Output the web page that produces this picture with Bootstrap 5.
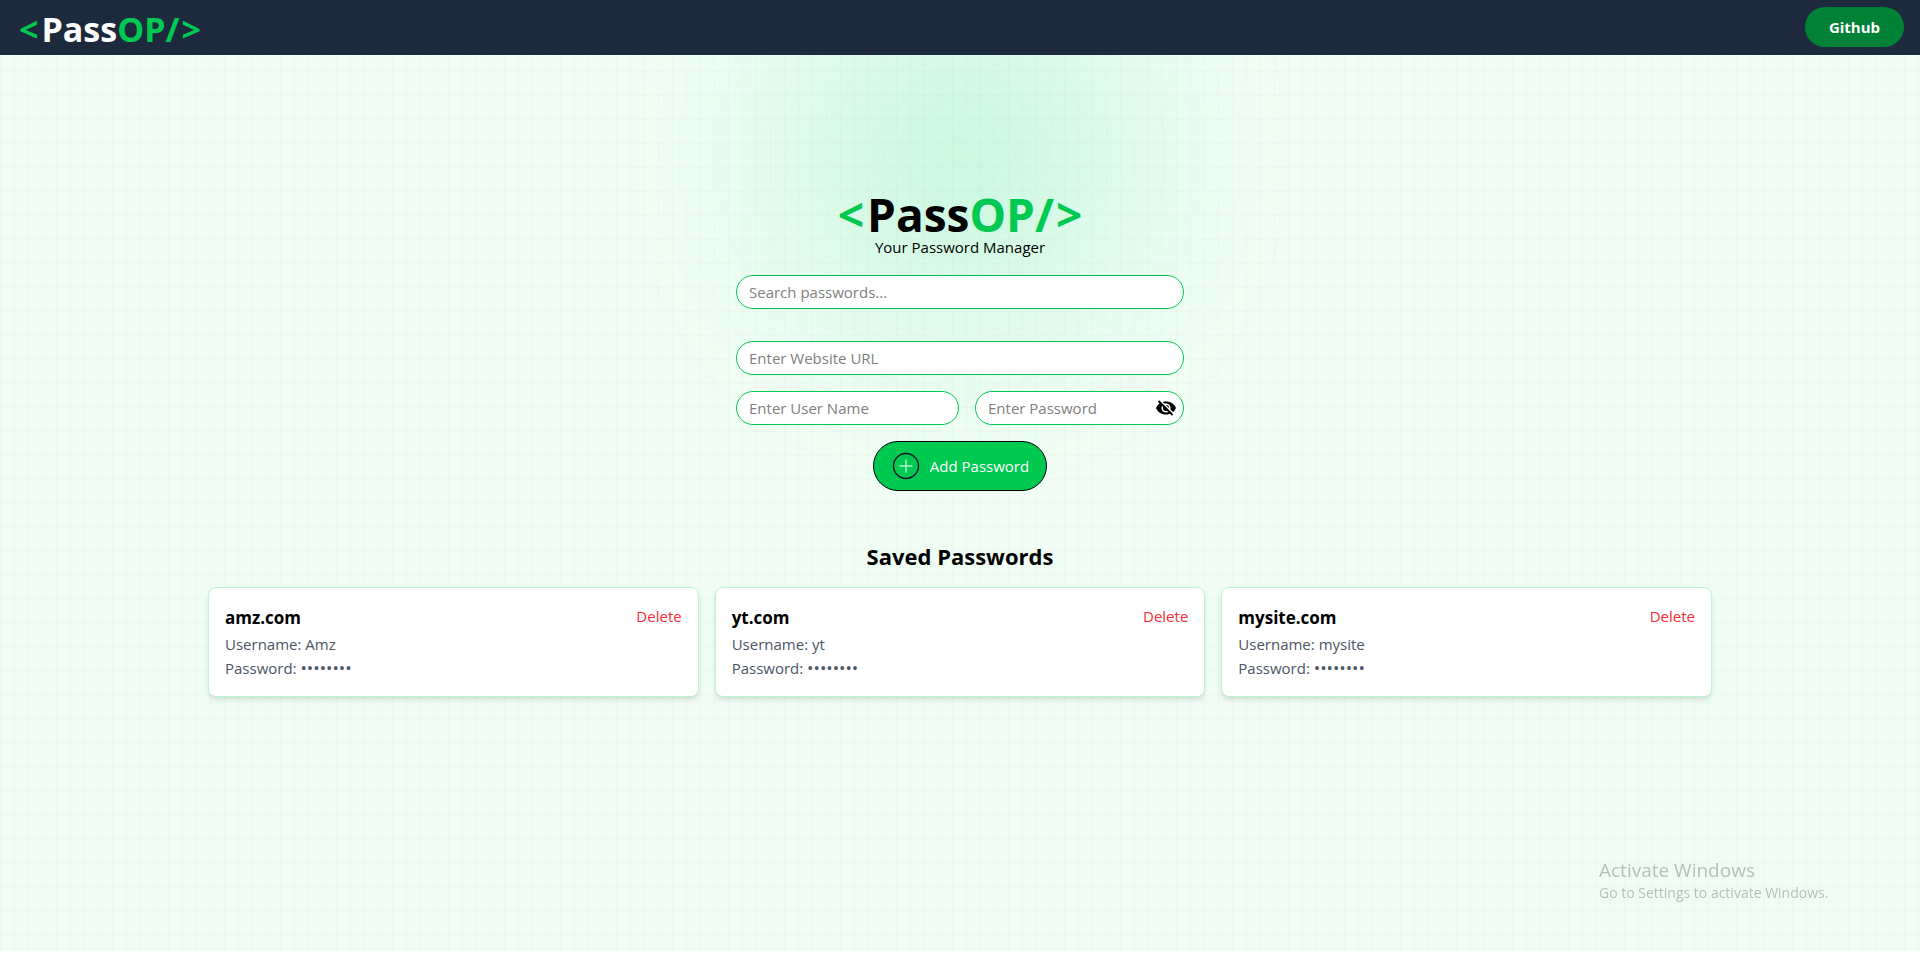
<!DOCTYPE html>
<html lang="en">
<head>
<meta charset="utf-8">
<meta name="viewport" content="width=device-width, initial-scale=1">
<title>PassOP</title>
<link href="https://cdn.jsdelivr.net/npm/bootstrap@5.3.0/dist/css/bootstrap.min.css" rel="stylesheet">
<style>
body { font-family: "Open Sans", "Noto Sans", sans-serif; font-size: 15px; line-height: 24px; color: #000; background: #fff; }
.page-shell { min-height: calc(100vh - 9px); background: #f0fdf4; position: relative; overflow: hidden; isolation: isolate; }
.grid-layer { position: absolute; inset: 0; z-index: -1;
  background: linear-gradient(to right, #8080800a 1px, transparent 1px) 0 -1px / 14px 24px, linear-gradient(to bottom, #8080800a 1px, transparent 1px) 0 -1px / 14px 24px; }
.glow { position: absolute; inset: 0 0 auto 0; margin: auto; width: 310px; height: 310px; border-radius: 50%; background: #05df72; opacity: .2; filter: blur(100px); }
.topbar { background: #1d293d; height: 55px; padding: 7px 16px 0 19px; }
.brand { font-size: 34px; line-height: 44px; font-weight: 700; color: #fff; text-decoration: none; }
.accent { color: #00c951; }
.tag-open { margin-right: 3px; }
.tag-close { margin-left: 2px; }
.btn-github { background: #008236; color: #fff; font-size: 15px; font-weight: 700; border: 0; border-radius: 20px; width: 99px; height: 40px; padding: 0; }
.btn-github:hover { background: #016630; color: #fff; }
.hero { padding-top: 138px; }
.hero h1 { font-size: 46px; line-height: 42px; font-weight: 700; margin: 0; }
.form-col { max-width: 448px; }
.pill { height: 34px; border: 1px solid #00c951; border-radius: 17px; padding: 4px 12px; font-size: 15px; line-height: 24px; color: #000; background: #fff; }
.pill::placeholder { color: #808080; opacity: 1; }
.pill:focus { border-color: #00c951; box-shadow: 0 0 0 2px #00c95140; }
.user-box { flex: 223 1 0; }
.pass-box { flex: 209 1 0; }
.eye-btn { position: absolute; right: 7px; top: 6px; width: 22px; height: 22px; padding: 0; border: 0; background: none; display: flex; align-items: center; justify-content: center; }
.btn-add { background: #00c951; color: #fff; border: 1px solid #000; border-radius: 25px; height: 50px; padding: 0 17px 0 16px; font-size: 15px; line-height: 24px; }
.btn-add:hover { background: #05df72; color: #fff; border-color: #000; }
.saved { max-width: 1536px; padding: 49px 16px 0; }
.saved h2 { font-size: 22px; line-height: 32px; font-weight: 700; margin: 0 0 15px; }
.entry { border: 1px solid #b9f8cf; border-radius: 8px; padding: 16px; background: #fff; box-shadow: 0 4px 6px -1px #0000001a, 0 2px 4px -2px #0000001a; }
.entry h3 { font-size: 17px; line-height: 28px; font-weight: 700; margin: 0; }
.entry p { color: #4a5565; margin: 0; }
.dots { font-size: 17px; line-height: 20px; }
.btn-del { color: #fb2c36; border: 0; background: none; padding: 0; }
.watermark { position: fixed; right: 84px; bottom: 57px; width: 237px; color: #b7bfba; pointer-events: none; }
.watermark strong { display: block; font-size: 19px; line-height: 26px; font-weight: 400; }
.watermark span { display: block; font-size: 14px; line-height: 20px; }
</style>
</head>
<body>
<div class="page-shell">
  <div class="grid-layer"><div class="glow"></div></div>
  <nav class="topbar d-flex align-items-start justify-content-between">
    <a class="brand" href="#"><span class="accent tag-open">&lt;</span>Pass<span class="accent">OP/</span><span class="accent tag-close">&gt;</span></a>
    <button type="button" class="btn btn-github">Github</button>
  </nav>
  <main>
    <section class="hero text-center px-3">
      <h1><span class="accent tag-open">&lt;</span>Pass<span class="accent">OP/</span><span class="accent tag-close">&gt;</span></h1>
      <p class="mb-3">Your Password Manager</p>
      <form class="form-col mx-auto d-flex flex-column align-items-center gap-3" onsubmit="return false">
        <input type="search" class="form-control pill mb-3" placeholder="Search passwords..." aria-label="Search passwords">
        <input type="url" class="form-control pill" placeholder="Enter Website URL" aria-label="Website URL">
        <div class="d-flex gap-3 w-100">
          <div class="user-box"><input type="text" class="form-control pill" placeholder="Enter User Name" aria-label="User name"></div>
          <div class="pass-box position-relative">
            <input type="password" class="form-control pill" placeholder="Enter Password" aria-label="Password">
            <button type="button" class="eye-btn" aria-label="Show password">
              <svg width="20" height="16" viewBox="0 0 20 16"><path d="M0 8C2 3.500 5.700 1.500 10 1.500s8 2 10 6.500c-2 4.500-5.700 6.500-10 6.500S2 12.500 0 8z"/><circle cx="10" cy="8" r="3.800" fill="none" stroke="#fff" stroke-width="1.500"/><path d="M3.800 0 17.500 13.500" stroke="#fff" stroke-width="1.500"/><path d="M2.500 1 16.500 15" stroke="#000" stroke-width="1.800"/></svg>
            </button>
          </div>
        </div>
        <button type="submit" class="btn btn-add d-flex align-items-center gap-2">
          <svg width="32" height="32" viewBox="0 0 32 32" fill="none"><circle cx="16" cy="16" r="12.500" stroke="#121331" stroke-width="1.400"/><path d="M9.500 16h13M16 9.500v13" stroke="#b5f2cd" stroke-width="1.400"/></svg>
          Add Password
        </button>
      </form>
    </section>
    <section class="saved container-fluid">
      <h2 class="text-center">Saved Passwords</h2>
      <div class="row g-3">
        <div class="col-12 col-md-4"><article class="entry d-flex justify-content-between align-items-start">
          <div><h3>amz.com</h3><p>Username: Amz</p><p>Password: <span class="dots">••••••••</span></p></div>
          <button type="button" class="btn-del">Delete</button>
        </article></div>
        <div class="col-12 col-md-4"><article class="entry d-flex justify-content-between align-items-start">
          <div><h3>yt.com</h3><p>Username: yt</p><p>Password: <span class="dots">••••••••</span></p></div>
          <button type="button" class="btn-del">Delete</button>
        </article></div>
        <div class="col-12 col-md-4"><article class="entry d-flex justify-content-between align-items-start">
          <div><h3>mysite.com</h3><p>Username: mysite</p><p>Password: <span class="dots">••••••••</span></p></div>
          <button type="button" class="btn-del">Delete</button>
        </article></div>
      </div>
    </section>
  </main>
</div>
<aside class="watermark"><strong>Activate Windows</strong><span>Go to Settings to activate Windows.</span></aside>
<script src="https://cdn.jsdelivr.net/npm/bootstrap@5.3.0/dist/js/bootstrap.bundle.min.js"></script>
</body>
</html>
